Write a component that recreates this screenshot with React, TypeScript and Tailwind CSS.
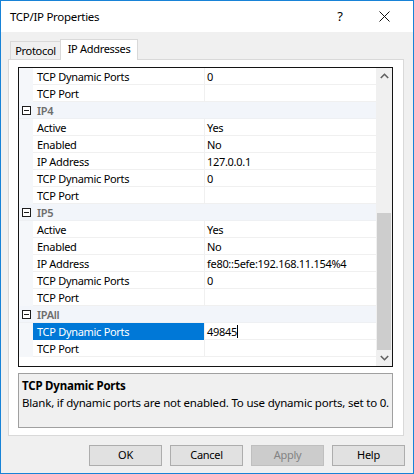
import React from "react";

type Row =
  | { kind: "cat"; label: string }
  | { kind: "prop"; label: string; value: string; selected?: boolean };

const rows: Row[] = [
  { kind: "prop", label: "TCP Dynamic Ports", value: "0" },
  { kind: "prop", label: "TCP Port", value: "" },
  { kind: "cat", label: "IP4" },
  { kind: "prop", label: "Active", value: "Yes" },
  { kind: "prop", label: "Enabled", value: "No" },
  { kind: "prop", label: "IP Address", value: "127.0.0.1" },
  { kind: "prop", label: "TCP Dynamic Ports", value: "0" },
  { kind: "prop", label: "TCP Port", value: "" },
  { kind: "cat", label: "IP5" },
  { kind: "prop", label: "Active", value: "Yes" },
  { kind: "prop", label: "Enabled", value: "No" },
  { kind: "prop", label: "IP Address", value: "fe80::5efe:192.168.11.154%4" },
  { kind: "prop", label: "TCP Dynamic Ports", value: "0" },
  { kind: "prop", label: "TCP Port", value: "" },
  { kind: "cat", label: "IPAll" },
  { kind: "prop", label: "TCP Dynamic Ports", value: "49845", selected: true },
  { kind: "prop", label: "TCP Port", value: "" },
];

const MinusBox = () => (
  <svg width="9" height="9" viewBox="0 0 9 9" className="block">
    <rect x="0.5" y="0.5" width="8" height="8" fill="white" stroke="#1e1e1e" />
    <line x1="2" y1="4.5" x2="7" y2="4.5" stroke="#1e1e1e" />
  </svg>
);

const GridRow = ({ row }: { row: Row }) => {
  if (row.kind === "cat") {
    return (
      <div className="flex h-[17px] bg-[#f2f5fa] border-b border-[#eef0f3]">
        <div className="w-[14px] flex items-center justify-end pr-[2px]">
          <MinusBox />
        </div>
        <div className="pl-[4px] flex items-center font-semibold text-[#6d6d6d] leading-none">
          {row.label}
        </div>
      </div>
    );
  }
  return (
    <div className="flex h-[17px]">
      <div className="w-[14px] bg-[#f5f7fa]" />
      <div
        className={
          row.selected
            ? "w-[171px] pl-[4px] flex items-center bg-[#0078d7] text-white leading-none"
            : "w-[171px] pl-[4px] flex items-center border-b border-[#f0f0f0] leading-none"
        }
      >
        {row.label}
      </div>
      <div className="w-px bg-[#f0f0f0]" />
      <div className="flex-1 pl-[2px] flex items-center border-b border-[#f0f0f0] leading-none">
        {row.value}
        {row.selected && <span className="inline-block w-px h-[13px] bg-black" />}
      </div>
    </div>
  );
};

const Button = ({ label, disabled }: { label: string; disabled?: boolean }) => (
  <div
    className={
      disabled
        ? "w-[73px] h-[21px] flex items-center justify-center border border-[#bfbfbf] bg-[#cccccc] text-[#838383]"
        : "w-[73px] h-[21px] flex items-center justify-center border border-[#adadad] bg-[#e1e1e1] text-black"
    }
  >
    {label}
  </div>
);

export default function App() {
  return (
    <div
      className="w-[414px] h-[474px] border border-[#1883d7] bg-[#f0f0f0] flex flex-col text-[11px] tracking-[-0.3px] text-black overflow-hidden"
      style={{ fontFamily: '"Noto Sans", "Liberation Sans", sans-serif' }}
    >
      {/* title bar */}
      <div className="h-[31px] bg-white flex items-center shrink-0">
        <div className="pl-[9px] flex-1 text-[11.5px]">TCP/IP Properties</div>
        <div className="w-[30px] text-center text-[13px]">?</div>
        <div className="w-[58px] flex justify-center">
          <svg width="11" height="11" viewBox="0 0 11 11">
            <path d="M0.5 0.5 L10.5 10.5 M10.5 0.5 L0.5 10.5" stroke="#111" strokeWidth="1" />
          </svg>
        </div>
      </div>

      {/* body */}
      <div className="flex-1 flex flex-col px-[7px] pt-[6px]">
        {/* tabs */}
        <div className="flex items-end h-[21px] pl-[2px]">
          <div className="h-[18px] w-[51px] border border-b-0 border-[#d9d9d9] bg-[#f0f0f0] flex items-center justify-center pt-[2px]">
            Protocol
          </div>
          <div className="h-[21px] w-[78px] -mb-px -ml-px border border-b-0 border-[#d9d9d9] bg-white flex items-center justify-center relative z-10 pb-[2px]">
            IP Addresses
          </div>
        </div>

        {/* tab panel */}
        <div className="w-[396px] h-[377px] border border-[#d9d9d9] bg-white px-[9px] pt-[7px] flex flex-col">
          <div className="w-[375px] h-[300px] border border-[#141414] flex">
            <div className="flex-1 flex flex-col">
              {rows.map((r, i) => (
                <GridRow key={i} row={r} />
              ))}
            </div>
            <div className="w-[16px] bg-[#f0f0f0] flex flex-col items-center">
              <div className="h-[17px] flex items-center justify-center">
                <svg width="9" height="6" viewBox="0 0 9 6">
                  <path d="M0.8 5 L4.5 1.3 L8.2 5" fill="none" stroke="#606060" strokeWidth="1.6" />
                </svg>
              </div>
              <div className="flex-1 w-full flex flex-col">
                <div className="h-[128px]" />
                <div className="h-[137px] mx-px bg-[#cdcdcd]" />
              </div>
              <div className="h-[17px] flex items-center justify-center">
                <svg width="9" height="6" viewBox="0 0 9 6">
                  <path d="M0.8 1 L4.5 4.7 L8.2 1" fill="none" stroke="#606060" strokeWidth="1.6" />
                </svg>
              </div>
            </div>
          </div>

          {/* description */}
          <div className="mt-[6px] w-[375px] h-[55px] border border-[#a0a0a0] bg-[#f0f0f0] px-[3px] pt-[4px] text-[11.5px] tracking-[-0.2px]">
            <div className="font-bold leading-[16px]">TCP Dynamic Ports</div>
            <div className="leading-[18px]">
              Blank, if dynamic ports are not enabled. To use dynamic ports, set to 0.
            </div>
          </div>
        </div>

        {/* buttons */}
        <div className="flex justify-end gap-[8px] mt-[9px] pr-[1px]">
          <Button label="OK" />
          <Button label="Cancel" />
          <Button label="Apply" disabled />
          <Button label="Help" />
        </div>
      </div>
    </div>
  );
}
